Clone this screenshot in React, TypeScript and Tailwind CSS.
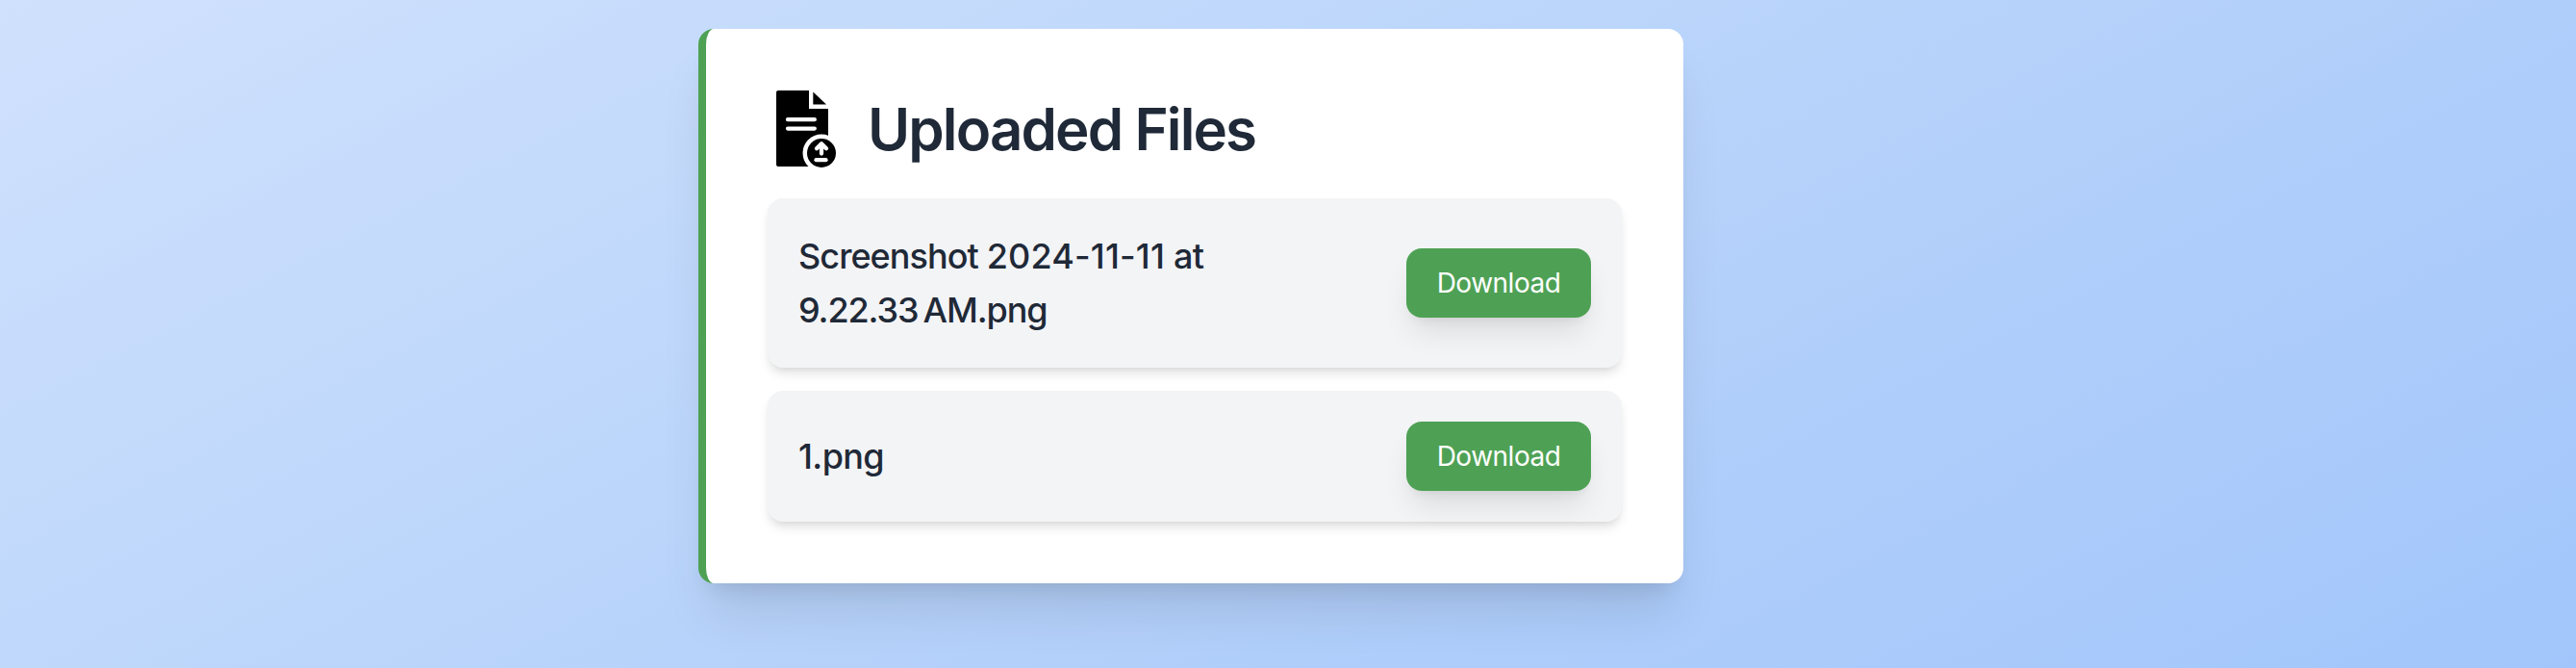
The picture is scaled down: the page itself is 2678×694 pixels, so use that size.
import type { ReactNode } from "react";

function FileUploadIcon() {
  return (
    <svg viewBox="0 0 80 80" className="size-20 shrink-0" aria-hidden="true">
      <path d="M11 0H43V19H63V79H11a2 2 0 0 1-2-2V2a2 2 0 0 1 2-2Z" />
      <path d="M43 0h22v19H45a2 2 0 0 1-2-2Z" fill="#fff" />
      <path d="M47.3 1.5V14.4H61Z" />
      <path d="M21 30.2H48.8M21 39.6H48.8" stroke="#fff" strokeWidth="4.3" strokeLinecap="round" />
      <circle cx="56" cy="65" r="19.5" fill="#fff" />
      <circle cx="56" cy="65" r="15" />
      <path d="M56 65.5V56.5M51 60.2L56 55.2L61 60.2" fill="none" stroke="#fff" strokeWidth="4.3" strokeLinecap="round" strokeLinejoin="round" />
      <path d="M50.5 72.2H60.5" stroke="#fff" strokeWidth="4.3" strokeLinecap="round" />
    </svg>
  );
}

function FileRow({ children }: { children: ReactNode }) {
  return (
    <li className="flex items-center justify-between rounded-[16px] bg-[#f3f4f6] p-8 shadow-[0_8px_12px_-2px_rgba(0,0,0,0.1),0_4px_8px_-4px_rgba(0,0,0,0.1)]">
      <span className="w-[500px] text-[36px] leading-[56px] font-medium tracking-[-0.6px] text-[#1f2937]">{children}</span>
      <button className="h-[72px] w-[192px] rounded-[16px] bg-[#4ea154] text-[28px] leading-10 tracking-[-0.5px] text-white shadow-[0_20px_30px_-6px_rgba(0,0,0,0.1),0_8px_12px_-8px_rgba(0,0,0,0.1)]">
        Download
      </button>
    </li>
  );
}

export default function App() {
  return (
    <main className="h-[694px] w-full overflow-hidden bg-[linear-gradient(153deg,#d0e1fd_0%,#bfd8fb_34%,#b0cefa_66%,#a2c6fb_100%)] pt-[30px] pl-[726px] font-['Inter',sans-serif]">
      <section className="h-[576px] w-[1024px] rounded-[16px] border-l-8 border-[#4ea154] bg-white p-16 shadow-[0_40px_50px_-10px_rgba(0,0,0,0.1),0_16px_20px_-12px_rgba(0,0,0,0.1)]">
        <header className="mb-8 flex h-20 items-center gap-6">
          <FileUploadIcon />
          <h1 className="text-[60px] leading-[72px] font-semibold tracking-[-1.88px] text-[#1f2937]">Uploaded Files</h1>
        </header>
        <ul className="flex flex-col gap-6">
          <FileRow>
            <span className="tracking-[-0.95px]">Screenshot</span>{" "}
            <span className="tracking-[0.15px]">2024-11-11</span> at{" "}
            <span className="tracking-[-1.1px]">{"9.22.33\u202fAM.png"}</span>
          </FileRow>
          <FileRow>1.png</FileRow>
        </ul>
      </section>
    </main>
  );
}
